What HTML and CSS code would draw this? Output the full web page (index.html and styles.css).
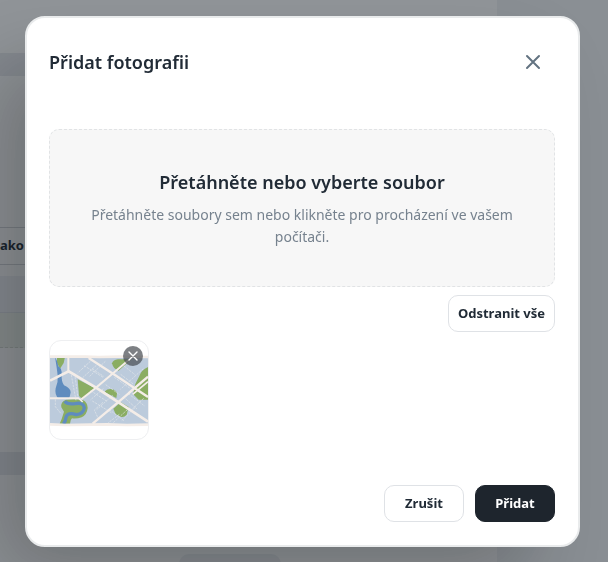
FILE: index.html
```html
<!DOCTYPE html>
<html lang="cs">
<head>
    <meta charset="UTF-8">
    <meta name="viewport" content="width=device-width, initial-scale=1.0">
    <title>Přidat fotografii</title>
    <link rel="stylesheet" href="styles.css">
</head>
<body>
    <div class="page">
        <div class="card card-top"></div>
        <div class="card card-main">
            <div class="field">ako</div>
            <div class="row row-head"></div>
            <div class="row row-item"></div>
        </div>
        <div class="card card-bottom">
            <div class="pill"></div>
        </div>
    </div>

    <div class="overlay">
        <div class="modal" role="dialog" aria-modal="true" aria-labelledby="modal-title">
            <div class="modal-header">
                <h2 id="modal-title">Přidat fotografii</h2>
                <button type="button" class="close" aria-label="Zavřít">
                    <svg width="16" height="16" viewBox="0 0 16 16"><path d="M2 2l12 12M14 2L2 14"/></svg>
                </button>
            </div>

            <label class="dropzone" for="files">
                <span class="dropzone-title">Přetáhněte nebo vyberte soubor</span>
                <span class="dropzone-text">Přetáhněte soubory sem nebo klikněte pro procházení ve vašem počítači.</span>
                <input type="file" id="files" class="file-input" multiple>
            </label>

            <div class="actions">
                <button type="button" class="btn">Odstranit vše</button>
            </div>

            <div class="thumb">
                <svg class="map" viewBox="18 18 294 294">
                    <rect x="18" y="66" width="294" height="202" fill="#bccbdc"/>
                    <!-- parks -->
                    <g fill="#8aad62">
                        <path d="M39 66h24l-4 18-11 17-9-17z"/>
                        <path d="M101 133l51 26-36 34-11-10z"/>
                        <path d="M204 85q3-10 18-12h40l-38 34q-16-4-20-22z"/>
                        <path d="M312 96v98h-28l-17-17 7-30 12-24q6-18 26-27z"/>
                        <path d="M183 169q6-8 19-7 14 2 17 14l-2 13-34-17z"/>
                        <path d="M208 221l22-19 24 14-6 23q-8 9-18 6l-15-8z"/>
                        <path d="M47 266l6-14 7-22-8-13q-3-17 14-23 30-3 50 1 15 7 15 24-2 20-18 28-15 5-29 3-6 5-6 16z"/>
                    </g>
                    <!-- river -->
                    <path d="M33 66q7 10 10 28 11 6 10 25-1 20 7 32 20 9 20 21-2 11-5 20H44q-13-14-9-32 8-18 6-38-2-20-8-56z" fill="#5f8cbe"/>
                    <path d="M62 199q8 10 31 7 25-5 28 12-2 18-24 21-27-9-31 8-1 12-8 20" fill="none" stroke="#5f8cbe" stroke-width="10"/>
                    <!-- side streets -->
                    <g fill="none" stroke="#e4e7ea" stroke-width="2" stroke-dasharray="7 3">
                        <path d="M82 120l14 77M92 116l10 73M34 193v22l18 22"/>
                        <path d="M139 79l-38 35M157 91l-41 37M120 92l59 36M184 79l-47 45M202 118l-44 35M144 101l35 23"/>
                        <path d="M240 93l34 27M298 101l-69 62M211 127l46 32M185 149l42 30M230 118l39 30"/>
                        <path d="M140 167l49 32M178 161l-39 34M206 181l-48 43M145 198l57 35M177 202l-26 23 12 26"/>
                        <path d="M226 238l-34 26M250 224l-42 39M274 217l-43 42M239 186l40 36M299 190l-44 42M195 223l45 34M253 176l49 37"/>
                    </g>
                    <!-- main roads -->
                    <g fill="none" stroke="#f4ede8">
                        <path d="M18 137l56-28 82 49 95 62 61 40" stroke-width="8"/>
                        <path d="M73 66v44M18 190h87M112 193l44-35 99-84" stroke-width="6"/>
                        <path d="M134 69l80 52 98 65M312 125l-90 77-76 64" stroke-width="7"/>
                        <path d="M222 201l-45-30M266 178l46-38M105 190l11 11" stroke-width="5"/>
                        <path d="M18 65h107l40 1 60-1 87 1M18 268l48 2 74-1 49-1 60 2 63-1" stroke-width="8"/>
                    </g>
                </svg>
                <button type="button" class="remove" aria-label="Odstranit">
                    <svg width="12" height="12" viewBox="0 0 12 12"><path d="M2 2l8 8M10 2l-8 8"/></svg>
                </button>
            </div>

            <div class="modal-footer">
                <button type="button" class="btn">Zrušit</button>
                <button type="button" class="btn btn-dark">Přidat</button>
            </div>
        </div>
    </div>
</body>
</html>
```

FILE: styles.css
```css
* {
    box-sizing: border-box;
}
body {
    margin: 0;
    background-color: #f2f4f6;
    color: #212b36;
    font-family: "Noto Sans", sans-serif;
    font-size: 14px;
    line-height: 22px;
    overflow: hidden;
}
.page {
    display: flex;
    flex-direction: column;
    gap: 23px;
    height: 100vh;
    margin-right: 111px;
    background-color: #e9ebef;
}
.card {
    flex-shrink: 0;
    background-color: #fff;
}
.card-top {
    height: 53px;
}
.card-main {
    height: 376px;
    padding-top: 151px;
}
.field {
    height: 38px;
    margin-bottom: 11px;
    padding-top: 6px;
    border: 1px solid #d3d5d9;
    border-left: none;
    border-right: none;
    font-size: 13px;
    font-weight: 700;
}
.row {
    height: 36px;
}
.row-head {
    background-color: #f0f2f5;
}
.row-item {
    background-color: #eff4ec;
    border-top: 1px solid #dfe3e8;
    border-bottom: 1px dashed #d5dad2;
}
.card-bottom {
    flex: 1;
    padding-top: 79px;
}
.pill {
    width: 102px;
    height: 30px;
    margin-left: 179px;
    border-radius: 10px;
    background-color: #eef0f4;
}

.overlay {
    position: fixed;
    inset: 0;
    padding: 16px 28px 15px 25px;
    background-color: rgba(26, 34, 42, 0.48);
}
.modal {
    padding: 22px 23px 23px 22px;
    border: 2px solid #e9ebec;
    border-radius: 20px;
    background-color: #fff;
    box-shadow: -40px 40px 80px -8px rgba(0, 0, 0, 0.24);
}
.modal-header {
    display: flex;
    align-items: center;
    justify-content: space-between;
    margin-bottom: 45px;
}
.modal-header h2 {
    margin: 0;
    font-size: 18px;
    font-weight: 600;
    line-height: 28px;
}
button {
    font-family: inherit;
    cursor: pointer;
}
.close {
    display: flex;
    align-items: center;
    justify-content: center;
    width: 44px;
    height: 44px;
    padding: 0;
    border: none;
    background: none;
}
.close svg,
.remove svg {
    fill: none;
    stroke: #637381;
    stroke-width: 2;
    stroke-linecap: round;
}
.dropzone {
    display: flex;
    flex-direction: column;
    align-items: center;
    gap: 8px;
    padding: 38px 36px;
    border: 1px dashed #e1e3e5;
    border-radius: 10px;
    background-color: #f7f7f7;
    text-align: center;
    cursor: pointer;
}
.dropzone-title {
    font-size: 18px;
    font-weight: 600;
    line-height: 28px;
}
.dropzone-text {
    color: #76828e;
}
.file-input {
    position: absolute;
    width: 1px;
    height: 1px;
    opacity: 0;
}
.actions {
    display: flex;
    justify-content: flex-end;
    margin: 8px 0;
}
.btn {
    min-width: 80px;
    height: 37px;
    padding: 0 9px 2px;
    border: 1px solid #dfe2e6;
    border-radius: 10px;
    background-color: #fff;
    color: #212b36;
    font-size: 13px;
    font-weight: 700;
}
.btn-dark {
    border-color: #1e252d;
    background-color: #1e252d;
    color: #fff;
}
.thumb {
    position: relative;
    width: 100px;
    height: 100px;
    border: 1px solid #eeeff1;
    border-radius: 12px;
    overflow: hidden;
}
.map {
    display: block;
    width: 100%;
}
.remove {
    position: absolute;
    top: 5px;
    right: 5px;
    display: flex;
    align-items: center;
    justify-content: center;
    width: 20px;
    height: 20px;
    padding: 0;
    border: none;
    border-radius: 50%;
    background-color: rgba(70, 74, 80, 0.7);
}
.remove svg {
    stroke: #fff;
    stroke-width: 1.4;
}
.modal-footer {
    display: flex;
    justify-content: flex-end;
    gap: 11px;
    margin-top: 45px;
}
```
